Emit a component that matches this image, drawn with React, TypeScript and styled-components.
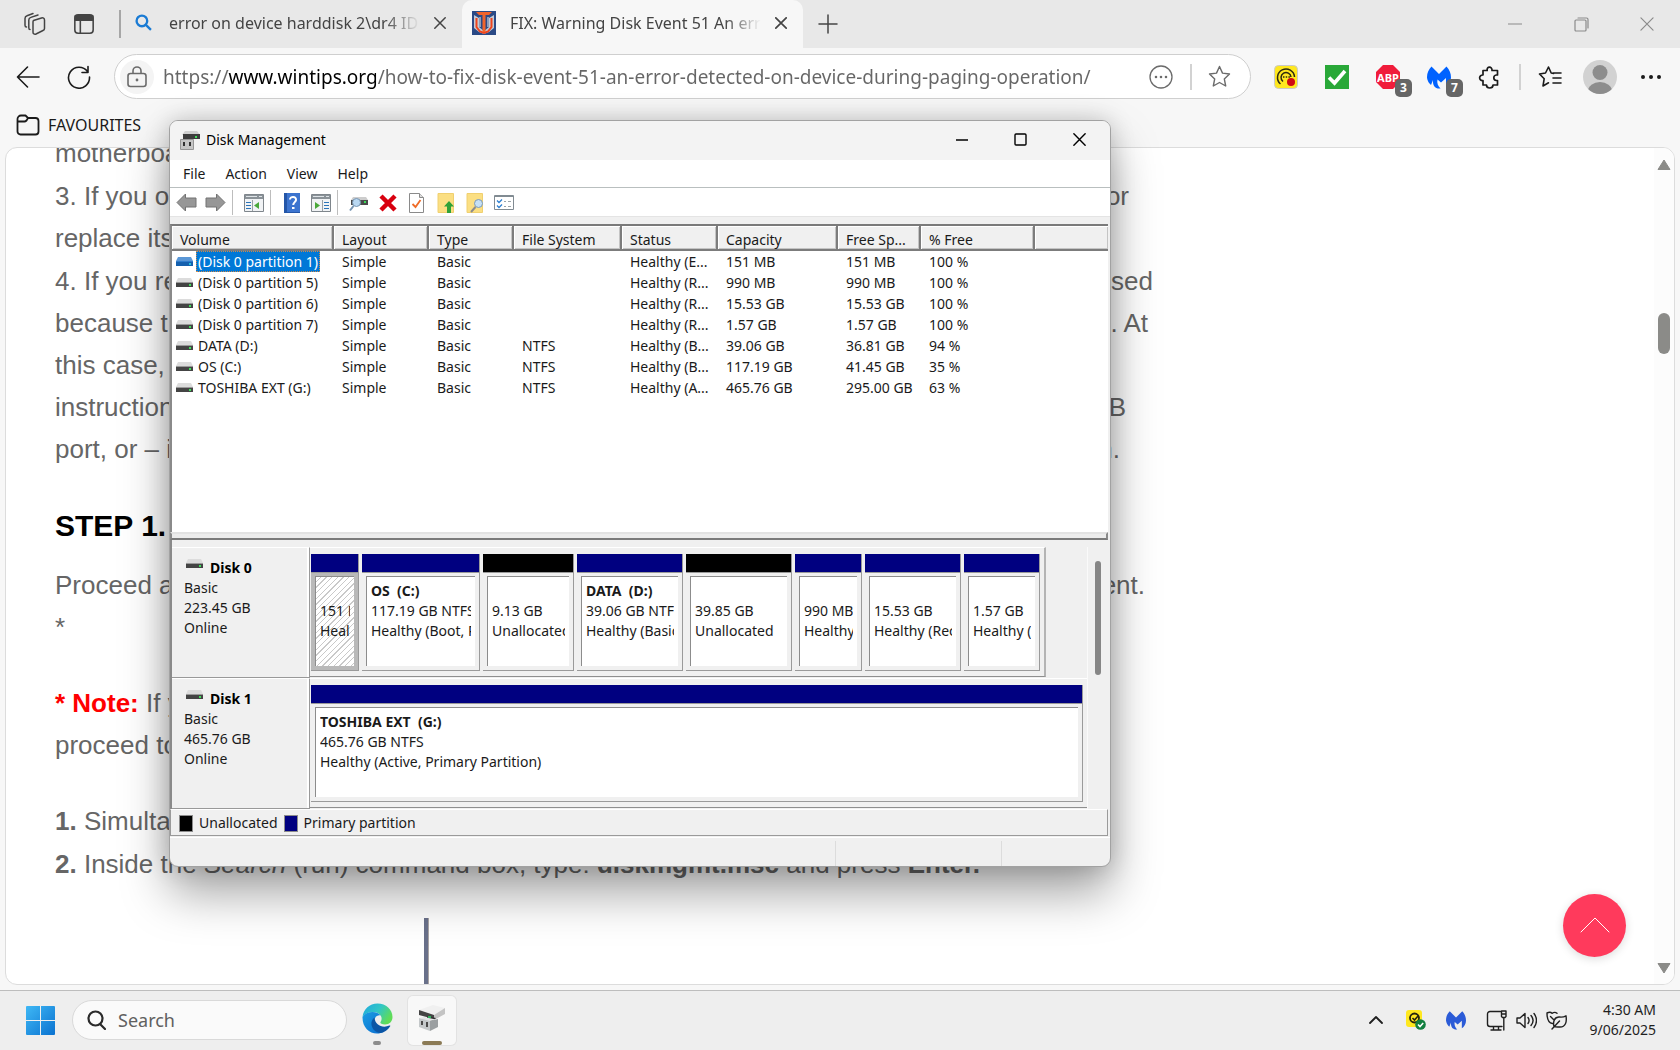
import React from "react";
import styled, { createGlobalStyle, css } from "styled-components";

const uiFont = `"Noto Sans", "Open Sans", sans-serif`;

const GlobalStyle = createGlobalStyle`
  *, *::before, *::after { box-sizing: border-box; }
  body { margin: 0; background: #f7f7f7; font-family: ${uiFont}; }
  button, input { font: inherit; color: inherit; }
  svg { display: block; flex: none; }
`;

/* ---------- desktop shell ---------- */

const Desktop = styled.div`
  position: relative;
  height: 100vh;
  display: flex;
  flex-direction: column;
  overflow: hidden;
  background: #f7f7f7;
`;

const plainButton = css`
  display: flex;
  align-items: center;
  justify-content: center;
  flex: none;
  padding: 0;
  border: 0;
  background: none;
`;

const IconButton = styled.button<{ $w: number }>`
  ${plainButton}
  position: relative;
  width: ${(p) => p.$w}px;
  height: 44px;
`;

const TabStrip = styled.nav`
  display: flex;
  align-items: center;
  height: 48px;
  padding-left: 10px;
  background: #e8e8e8;
  color: #444;
`;

const StripDivider = styled.span`
  width: 2px;
  height: 28px;
  margin: 0 0 0 9px;
  background: #a6a6a6;
`;

const Tab = styled.div<{ $active?: boolean }>`
  display: flex;
  align-items: center;
  width: 341px;
  height: 48px;
  padding: 0 10px 3px;
  font-size: 16px;
  line-height: 24px;
  border-radius: 10px 10px 0 0;
  background: ${(p) => (p.$active ? "#f7f7f7" : "transparent")};
`;

const Favicon = styled.span`
  display: flex;
  justify-content: center;
  flex: none;
  width: 24px;
`;

const TabTitle = styled.span`
  flex: 1;
  min-width: 0;
  margin: 0 8px 0 14px;
  overflow: hidden;
  white-space: nowrap;
  mask-image: linear-gradient(to right, #000 calc(100% - 36px), transparent);
`;

const SmallButton = styled.button<{ $w?: number }>`
  ${plainButton}
  width: ${(p) => p.$w ?? 24}px;
  height: 24px;
`;

const WindowControls = styled.div`
  display: flex;
  margin-left: auto;
  color: #8a8a8a;
`;

const AddressRow = styled.header`
  display: flex;
  align-items: center;
  padding: 6px 3px 0 2px;
  color: #1b1b1b;
`;

const AddressBar = styled.label`
  display: flex;
  align-items: center;
  flex: 1;
  min-width: 0;
  height: 45px;
  margin: 0 9px 0 10px;
  padding: 0 6px 0 5px;
  border: 1px solid #cfcfcf;
  border-radius: 23px;
  background: #fff;
  color: #6b6b6b;
`;

const LockBadge = styled.span`
  display: flex;
  align-items: center;
  justify-content: center;
  width: 34px;
  height: 34px;
  border-radius: 50%;
  background: #f4f4f4;
`;

const AddressInput = styled.input`
  flex: 1;
  min-width: 0;
  padding: 0;
  margin-left: 9px;
  border: 0;
  outline: 0;
  font-size: 19px;
  line-height: 28px;
  background-color: transparent;
  background-image: linear-gradient(to right, #666 0 65px, #000 65px 213px, #666 213px);
  background-clip: text;
  -webkit-background-clip: text;
  -webkit-text-fill-color: transparent;
`;

const BarDivider = styled.span`
  flex: none;
  width: 2px;
  height: 26px;
  margin: 0 4px;
  background: #d2d2d2;
`;

const Count = styled.span`
  position: absolute;
  right: 1px;
  bottom: 2px;
  width: 17px;
  height: 18px;
  border-radius: 5px;
  background: #666;
  color: #fff;
  font-size: 12px;
  font-weight: 700;
  line-height: 18px;
  text-align: center;
`;

const Avatar = styled.button`
  ${plainButton}
  margin: 0 8px;
`;

const FavouritesBar = styled.div`
  display: flex;
  padding: 11px 16px 0;
  height: 48px;
`;

const FavouriteFolder = styled.button`
  ${plainButton}
  gap: 8px;
  height: 30px;
  font-size: 16px;
  line-height: 24px;
  color: #1b1b1b;
`;

/* ---------- article ---------- */

const PageCard = styled.main`
  position: relative;
  flex: 1;
  min-height: 0;
  display: flex;
  margin: 0 5px 5px;
  overflow: hidden;
  border: 1px solid #dcdcdc;
  border-radius: 12px;
  background: #fff;
`;

const Article = styled.article`
  flex: 1;
  min-width: 0;
  margin-top: -16px;
  padding-left: 49px;
  color: #666;
  font-family: "Liberation Sans", Arial, sans-serif;
  font-size: 26px;
  line-height: 42px;
`;

const Paragraph = styled.p<{ $gap?: number }>`
  margin: ${(p) => p.$gap ?? 1}px 0 0;
`;

const Line = styled.span<{ $w?: number }>`
  display: flex;
  justify-content: space-between;
  width: ${(p) => (p.$w ? `${p.$w}px` : "auto")};
  white-space: pre;
`;

const StepHeading = styled.h2`
  margin: 35px 0 17px;
  color: #000;
  font-size: 30px;
  line-height: 42px;
`;

const NoteLabel = styled.strong`
  color: #f00;
`;

const FigureEdge = styled.div`
  width: 5px;
  height: 120px;
  margin: 33px 0 0 369px;
  background: #69708a;
  border-right: 1px solid #a9a4a4;
`;

const ScrollRail = styled.div`
  display: flex;
  flex-direction: column;
  align-items: center;
  width: 20px;
  padding: 11px 0 10px;
  background: #fcfcfc;
  color: #8b8b88;
`;

const ScrollThumb = styled.span`
  width: 12px;
  height: 41px;
  margin: 142px 0 auto;
  border-radius: 6px;
  background: #8b8b88;
`;

const TopButton = styled.button`
  ${plainButton}
  position: absolute;
  right: 48px;
  bottom: 27px;
  width: 63px;
  height: 63px;
  border-radius: 50%;
  background: #ff3a5c;
  color: #fff;
  box-shadow: 0 2px 10px rgba(0, 0, 0, 0.14);
`;

/* ---------- disk management window ---------- */

const MgmtWindow = styled.section`
  position: absolute;
  left: 169px;
  top: 120px;
  width: 942px;
  overflow: hidden;
  border: 1px solid #a2a2a2;
  border-radius: 9px;
  background: #f0f0f0;
  color: #1a1a1a;
  font-size: 14px;
  line-height: 20px;
  box-shadow: 0 26px 48px rgba(0, 0, 0, 0.36), 0 0 24px rgba(0, 0, 0, 0.18);
`;

const TitleBar = styled.header`
  display: flex;
  align-items: center;
  height: 39px;
  padding: 0 1px 2px 10px;
  background: #f3f3f3;
  color: #000;
`;

const TitleText = styled.h1`
  flex: 1;
  margin: 0 0 0 6px;
  font-size: 14px;
  font-weight: 400;
  line-height: 20px;
`;

const TitleButton = styled.button`
  ${plainButton}
  width: 59px;
  height: 36px;
`;

const MenuBar = styled.nav`
  display: flex;
  gap: 20px;
  height: 28px;
  padding: 0 13px;
  background: #fff;
  border-bottom: 1px solid #b9bfbf;
`;

const MenuItem = styled.button`
  ${plainButton}
`;

const ToolBar = styled.div`
  display: flex;
  align-items: center;
  height: 29px;
  padding: 1px 2px 0;
  background: #fff;
  border-bottom: 1px solid #e4e4e4;
`;

const ToolButton = styled.button`
  ${plainButton}
  width: 29px;
  height: 26px;
`;

const ToolDivider = styled.span`
  width: 1px;
  height: 25px;
  margin: 0 6px 0 2px;
  background: #bdbdbd;
`;

const ListPane = styled.div`
  height: 308px;
  margin: 7px 2px 0 0;
  border-top: 2px solid #7a7a7a;
  border-left: 2px solid #8a8a8a;
  background: #fff;
`;

const VolumeTable = styled.table`
  width: 100%;
  table-layout: fixed;
  border-collapse: separate;
  border-spacing: 0;
`;

const HeadCell = styled.th<{ $w?: number }>`
  width: ${(p) => (p.$w ? `${p.$w}px` : "auto")};
  height: 25px;
  padding: 5px 0 0 8px;
  border-right: 2px solid #7c7c7c;
  border-bottom: 2px solid #7c7c7c;
  box-shadow: inset 1px 1px 0 #fff, inset -1px -1px 0 #c4c4c4;
  background: #f0f0f0;
  font-weight: 400;
  line-height: 18px;
  text-align: left;
  white-space: nowrap;
  &:last-child { border-right: 0; }
`;

const Cell = styled.td`
  height: 21px;
  padding: 1px 0 0 8px;
  line-height: 20px;
  white-space: nowrap;
  &:first-child { padding: 0 0 0 4px; }
`;

const VolumeName = styled.span<{ $selected: boolean }>`
  display: flex;
  align-items: center;
  gap: 3px;
  > span {
    padding: 0 1px;
    border: 1px dotted ${(p) => (p.$selected ? "#d08a4a" : "transparent")};
    line-height: 19px;
    background: ${(p) => (p.$selected ? "#0078d7" : "none")};
    color: ${(p) => (p.$selected ? "#fff" : "inherit")};
  }
`;

const Splitter = styled.div`
  height: 8px;
  margin-right: 2px;
  border-top: 2px solid #e2e2e2;
  border-bottom: 2px solid #7a7a7a;
  border-left: 2px solid #8a8a8a;
  border-right: 2px solid #8a8a8a;
  background: #ececec;
`;

const GraphPane = styled.div`
  display: flex;
  margin-right: 2px;
  padding-top: 7px;
  border-left: 2px solid #8a8a8a;
`;

const Disks = styled.div`
  flex: 1;
  min-width: 0;
`;

const DiskRow = styled.div`
  display: flex;
  height: 131px;
`;

const DiskLabel = styled.div`
  flex: none;
  width: 138px;
  padding: 10px 0 0 12px;
  border-top: 1px solid #fff;
  border-right: 1px solid #999;
  border-bottom: 1px solid #999;
  box-shadow: inset -2px 0 0 #fff;
`;

const DiskTitle = styled.div`
  display: flex;
  gap: 7px;
  padding-left: 2px;
  color: #000;
  font-weight: 700;
`;

const Partitions = styled.div<{ $full?: boolean }>`
  display: flex;
  flex: ${(p) => (p.$full ? "1" : "none")};
  gap: 3px;
  height: 130px;
  padding: 6px ${(p) => (p.$full ? 4 : 4)}px 5px 1px;
  border-top: 1px solid #fff;
  border-right: ${(p) => (p.$full ? "0" : "2px solid #b4b4b4")};
  border-bottom: 1px solid #8e8e8e;
`;

const Partition = styled.div<{ $w?: number }>`
  display: flex;
  flex-direction: column;
  flex: ${(p) => (p.$w ? `0 0 ${p.$w}px` : "1")};
  min-width: 0;
  border-right: 1px solid #9a9a9a;
  border-bottom: 1px solid #9a9a9a;
`;

const PartitionBar = styled.div<{ $free?: boolean }>`
  flex: none;
  height: 19px;
  border-bottom: 1px solid #9a9a9a;
  background: ${(p) => (p.$free ? "#000" : "#000080")};
`;

const PartitionFrame = styled.div<{ $selected?: boolean }>`
  display: flex;
  flex: 1;
  min-height: 0;
  padding: 3px 4px 4px;
  background: ${(p) => (p.$selected ? "#b9b9b9" : "#f0f0f0")};
`;

const PartitionBody = styled.div<{ $selected?: boolean }>`
  flex: 1;
  min-width: 0;
  padding: 4px 4px 0;
  border-top: 1px solid #8c8c8c;
  border-left: 1px solid #8c8c8c;
  background: ${(p) =>
    p.$selected
      ? "repeating-linear-gradient(135deg, #fff 0 3px, #c9c9c9 3px 4px)"
      : "#fff"};
`;

const PartitionText = styled.div<{ $bold?: boolean }>`
  height: 20px;
  overflow: hidden;
  white-space: pre;
  font-weight: ${(p) => (p.$bold ? 700 : 400)};
`;

const PaneScroll = styled.div`
  width: 21px;
  border-left: 1px solid #fafafa;
`;

const PaneThumb = styled.div`
  width: 6px;
  height: 114px;
  margin: 14px 0 0 7px;
  border-radius: 3px;
  background: #868686;
`;

const Legend = styled.div`
  display: flex;
  align-items: center;
  gap: 6px;
  height: 27px;
  margin-right: 2px;
  padding: 1px 0 0 8px;
  border: 1px solid #9a9a9a;
  border-top-color: #fff;
`;

const Swatch = styled.span<{ $c: string }>`
  width: 14px;
  height: 17px;
  border: 1px solid #8c8c8c;
  background: ${(p) => p.$c};
`;

const StatusBar = styled.footer`
  display: flex;
  height: 29px;
  margin-top: 1px;
  border-top: 1px solid #fff;
`;

const StatusCell = styled.span<{ $w?: number }>`
  flex: ${(p) => (p.$w ? `0 0 ${p.$w}px` : "1")};
  margin-top: 3px;
  border-left: ${(p) => (p.$w ? "1px solid #dcdcdc" : "0")};
`;

/* ---------- taskbar ---------- */

const TaskBar = styled.footer`
  display: flex;
  align-items: center;
  height: 60px;
  padding: 0 24px 1px 26px;
  border-top: 1px solid #bdbdbd;
  background: #eee;
  color: #1f1f1f;
`;

const SearchBox = styled.label`
  display: flex;
  align-items: center;
  gap: 12px;
  width: 275px;
  height: 40px;
  margin: 0 6px 0 17px;
  padding: 0 14px;
  border: 1px solid #d9d9d9;
  border-radius: 20px;
  background: #fafafa;
`;

const SearchInput = styled.input`
  flex: 1;
  min-width: 0;
  padding: 0;
  border: 0;
  outline: 0;
  background: none;
  font-size: 18px;
  line-height: 26px;
  &::placeholder { color: #606060; opacity: 1; }
`;

const TaskButton = styled.button<{ $active?: boolean }>`
  ${plainButton}
  position: relative;
  width: 48px;
  height: 49px;
  margin: 0 3px 0 ${(p) => (p.$active ? "4px" : "0")};
  padding: 0 0 4px;
  border-radius: 5px;
  background: ${(p) => (p.$active ? "#f8f8f8" : "none")};
  box-shadow: ${(p) => (p.$active ? "0 0 0 1px #e2e2e2" : "none")};
  &::after {
    content: "";
    position: absolute;
    bottom: 0;
    left: 50%;
    width: ${(p) => (p.$active ? 20 : 8)}px;
    height: 4px;
    border-radius: 2px;
    transform: translateX(-50%);
    background: ${(p) => (p.$active ? "#8b7a55" : "#8c8c8c")};
  }
`;

const Tray = styled.div`
  display: flex;
  align-items: center;
  margin-left: auto;
`;

const TrayButton = styled.button<{ $w: number }>`
  ${plainButton}
  width: ${(p) => p.$w}px;
  height: 40px;
`;

const Clock = styled.time`
  width: 85px;
  font-size: 14px;
  line-height: 20px;
  text-align: right;
`;

/* ---------- icons ---------- */

type StrokeProps = { size?: number; w?: number; children: React.ReactNode; box?: number };
const Stroke = ({ size = 24, w = 1.6, box = 24, children }: StrokeProps) => (
  <svg width={size} height={size} viewBox={`0 0 ${box} ${box}`} fill="none" stroke="currentColor"
    strokeWidth={w} strokeLinecap="round" strokeLinejoin="round" aria-hidden="true">{children}</svg>
);

const Cross = ({ size = 12, w = 1.5 }: { size?: number; w?: number }) => (
  <Stroke size={size} box={12} w={w}><path d="M.8.8l10.4 10.4M11.2.8L.8 11.2" /></Stroke>
);

const DriveIcon = ({ selected }: { selected?: boolean }) => (
  <svg width="17" height="12" viewBox="0 0 17 12" aria-hidden="true">
    <path d="M2 1h13l2 4H0z" fill={selected ? "#5a97d6" : "#dcdcdc"} />
    <path d="M0 5h17v5H0z" fill={selected ? "#1560ae" : "#444"} />
    <path d="M0 5h17v1H0z" fill={selected ? "#2f7ccc" : "#9a9a9a"} />
    <path d="M13 7h2v2h-2z" fill={selected ? "#25c0d8" : "#3fe05a"} />
  </svg>
);

const DiskAppIcon = () => (
  <svg width="20" height="20" viewBox="0 0 20 20" aria-hidden="true">
    <path d="M5 1h12l3 4H2z" fill="#d0d0d0" />
    <path d="M3 4h17v5H3z" fill="#3d3d3d" />
    <path d="M15 6h2v2h-2z" fill="#42df5c" />
    <path d="M.5 9.500h13v10H.5z" fill="#c6c6c6" stroke="#969696" />
    <path d="M3 12h2v4H3zM9 12h2v4H9z" fill="#333" />
  </svg>
);

const TaskDiskIcon = () => (
  <svg width="28" height="28" viewBox="0 0 28 28" aria-hidden="true">
    <path d="M1 6L15 1l12 3-11 7z" fill="#f0f0f0" />
    <path d="M1 6l15 5v4L1 11z" fill="#444" />
    <path d="M16 11l11-7v6l-11 6z" fill="#c4c4c4" />
    <path d="M9 12l9 2-4 4-5-2z" fill="#353535" />
    <path d="M10 12h3v2h-3z" fill="#2fb35c" />
    <path d="M1 14l11 2v11L1 23z" fill="#c4c8ca" />
    <path d="M1 14l5-1 14 3-8 1z" fill="#e3e5e6" />
    <path d="M12 17l8-2v8l-8 4z" fill="#9b9fa1" />
    <path d="M3 17h2v4H3zM8 18h2v5H8z" fill="#4a4a4a" />
  </svg>
);

const WintipsIcon = () => (
  <svg width="24" height="24" viewBox="0 0 24 24" aria-hidden="true">
    <path d="M0 0h24v24H0z" fill="#2b4a86" />
    <path d="M2 4l5 3v9l5 4 5-4V7l5-3v13l-5 4-5 2-5-2-5-4z" fill="#c3c9d4" />
    <path d="M4.500 7v9l3.500 4.500 4 1.500 4-1.500 3.500-4.500V7" fill="none" stroke="#f0441c" strokeWidth="2" />
    <path d="M8 6v10M16 6v10" stroke="#c3c9d4" strokeWidth="1.300" />
    <path d="M4 1h16l-3 3h-3.500v17h-3V4H7z" fill="#f0642c" />
  </svg>
);

const MalwareIcon = ({ c, size = 24 }: { c: string; size?: number }) => (
  <svg width={size} height={size} viewBox="0 0 24 24" aria-hidden="true">
    <path d="M4.500 1.500L12 9l7.500-7.500C22.500 4.500 24 8.500 24 12.500c0 4-2 7.500-5 9.500v-9l-5 4.500-3.500-3c-.8 3.500.5 6.500 3 9-5.500.5-8-3-7.500-8.500L4 20C.5 17 0 13 0 12 0 8 1.800 4 4.500 1.500z" fill={c} />
  </svg>
);

const EdgeIcon = () => (
  <svg width="31" height="31" viewBox="0 0 31 31" aria-hidden="true">
    <defs>
      <linearGradient id="edgeTop" x1="0" y1="0" x2="1" y2="0.5">
        <stop offset="0" stopColor="#1fa7e0" /><stop offset=".55" stopColor="#31c6c6" /><stop offset="1" stopColor="#5fdc57" />
      </linearGradient>
      <linearGradient id="edgeLeft" x1="0" y1="0" x2="1" y2="1">
        <stop offset="0" stopColor="#1b9de2" /><stop offset="1" stopColor="#0a6cd0" />
      </linearGradient>
    </defs>
    <path d="M.5 14C1.500 6 7.500.5 15.500.5 24 .5 30.500 6.500 30.500 14c0 4.500-3 7.500-7.500 7.500-3.500 0-5-1.300-4.600-2.300.5-1 1.200-1.700 1.200-3.700C19.600 12 16 9 11 9 6 9 2.500 11 .5 14z" fill="url(#edgeTop)" />
    <path d="M.5 14C2.500 10.500 6 9 10.500 9c4 0 6.500 1.500 8 3.500-2.500-1-6.500 1.500-6.500 6 0 5.500 4.500 10 10 10-2 1.500-4.500 2-7 2C7 30.500.3 24 .5 14z" fill="url(#edgeLeft)" />
    <path d="M12.500 14.500C10 16.500 9 19 9.500 22c.8 4.500 4.500 7.500 9 8 4-.8 7.500-3.200 9.700-6.800.3-.6-.2-1-.8-.7C21 25.500 13 22.500 12.500 14.500z" fill="#0b55a5" />
  </svg>
);

const WindowsIcon = () => (
  <svg width="29" height="29" viewBox="0 0 29 29" aria-hidden="true">
    <defs>
      <linearGradient id="win" x1="0" y1="0" x2="1" y2="1">
        <stop offset="0" stopColor="#3fb8f5" /><stop offset="1" stopColor="#0a72d0" />
      </linearGradient>
    </defs>
    <path d="M1 0h13v14H0V1a1 1 0 011-1zM15 0h13a1 1 0 011 1v13H15zM0 15h14v14H1a1 1 0 01-1-1zM15 15h14v13a1 1 0 01-1 1H15z" fill="url(#win)" />
  </svg>
);

const Puzzle = () => (
  <Stroke w={1.7}><path d="M5 5.500h4.200C8.200 1 14.500 1 14 5.500h5.500V10h-1.300c-3.200.5-3.200 5 0 5.500h1.300V20H15c0 4-6.500 4-6.500 0H5v-4.500C.5 16 .5 9.800 5 10z" /></Stroke>
);

const starPath = "M11.500 1.500l3 6.600 7 .9-5.200 4.900 1.400 7.100-6.200-3.500L5.300 21l1.400-7.100L1.500 9l7-.9z";

const PanelIcon = ({ flip }: { flip?: boolean }) => (
  <svg width="20" height="18" viewBox="0 0 20 18" aria-hidden="true">
    <path d="M.5.500h19v17H.5z" fill="#f1f3f5" stroke="#7f868c" />
    <path d="M1 1h18v4H1z" fill="#8a9298" />
    <path d="M2 2h11v1H2zM15 2h3v1h-3z" fill="#dfe4e8" />
    <path d={flip ? "M13 8h5v1h-5zM13 11h5v1h-5zM13 14h5v1h-5z" : "M2 8h5v1H2zM2 11h5v1H2zM2 14h5v1H2z"} fill="#2b74b8" />
    <path d={flip ? "M11.500 6v11" : "M8.500 6v11"} stroke="#9aa1a6" />
    <path d={flip ? "M4 8l5 3.500L4 15z" : "M15 8l-5 3.500L15 15z"} fill="#4aa83a" />
  </svg>
);

const Arrow = ({ flip }: { flip?: boolean }) => (
  <svg width="21" height="19" viewBox="0 0 21 19" aria-hidden="true">
    <path d={flip ? "M20 9.500L11.500 18v-4H1V5h10.500V1z" : "M1 9.500L9.500 1v4H20v9H9.500v4z"} fill="#979797" stroke="#737373" />
  </svg>
);

const HelpIcon = () => (
  <svg width="16" height="20" viewBox="0 0 16 20" aria-hidden="true">
    <path d="M0 0h16v20H0z" fill="#2456a8" /><path d="M3 0h13v19H3z" fill="#3c74cf" />
    <path d="M6 6.500C6 3 12.500 3 12 7c-.3 2-2.800 2.500-2.800 5" fill="none" stroke="#fff" strokeWidth="2" />
    <path d="M8 14h2.500v2H8z" fill="#fff" />
  </svg>
);

const ScanDiskIcon = () => (
  <svg width="20" height="18" viewBox="0 0 20 18" aria-hidden="true">
    <path d="M4 3h13l2 3H2z" fill="#cdcdcd" /><path d="M2 6h17v5H2z" fill="#4a4a4a" />
    <path d="M15 7h2v2h-2z" fill="#3cdc58" />
    <circle cx="7.500" cy="8.500" r="4" fill="#b9d8f2" stroke="#7795b2" /><path d="M4.500 12L1 16.500" stroke="#7795b2" strokeWidth="2" />
  </svg>
);

const RedCross = () => (
  <svg width="18" height="18" viewBox="0 0 18 18" aria-hidden="true">
    <path d="M2 2l14 14M16 2L2 16" stroke="#d8000f" strokeWidth="4.500" />
  </svg>
);

const CheckDoc = () => (
  <svg width="15" height="20" viewBox="0 0 15 20" aria-hidden="true">
    <path d="M.5.500h10l4 4v15H.5z" fill="#fff" stroke="#8a8a8a" /><path d="M10.500.500v4h4" fill="#ddd" stroke="#8a8a8a" />
    <path d="M3.500 11l3 3 5-7" fill="none" stroke="#ef6c28" strokeWidth="1.800" />
  </svg>
);

const FolderTool = ({ find }: { find?: boolean }) => (
  <svg width="18" height="20" viewBox="0 0 18 20" aria-hidden="true">
    <path d="M1 .5h15.500v19H1z" fill="#fbdf83" stroke="#f0d070" />
    {find ? (
      <><circle cx="12.500" cy="10.500" r="4" fill="#c5e0f5" stroke="#7c9ab8" /><path d="M9.500 14L5 19" stroke="#8c8c8c" strokeWidth="2" /></>
    ) : (
      <path d="M12 8l5 5.500h-3V20h-4v-6.500H7z" fill="#2fa238" />
    )}
  </svg>
);

const OptionsIcon = () => (
  <svg width="20" height="17" viewBox="0 0 20 17" aria-hidden="true">
    <path d="M.5 1.500h19v14H.5z" fill="#fff" stroke="#818b92" /><path d="M1 1h18v2H1z" fill="#818b92" />
    <path d="M3 6.500l2 2 3-3M3 11.500l2 2 3-3" fill="none" stroke="#2d7fd0" strokeWidth="1.300" />
    <path d="M10 7.500h2M14 7.500h3M10 12.500h2M14 12.500h3" stroke="#9aa3a9" />
  </svg>
);

/* ---------- data ---------- */

const columns: [string, number?][] = [
  ["Volume", 162], ["Layout", 95], ["Type", 85], ["File System", 108], ["Status", 96],
  ["Capacity", 120], ["Free Sp...", 83], ["% Free", 114], [""],
];

const volumes = [
  ["(Disk 0 partition 1)", "Simple", "Basic", "", "Healthy (E...", "151 MB", "151 MB", "100 %"],
  ["(Disk 0 partition 5)", "Simple", "Basic", "", "Healthy (R...", "990 MB", "990 MB", "100 %"],
  ["(Disk 0 partition 6)", "Simple", "Basic", "", "Healthy (R...", "15.53 GB", "15.53 GB", "100 %"],
  ["(Disk 0 partition 7)", "Simple", "Basic", "", "Healthy (R...", "1.57 GB", "1.57 GB", "100 %"],
  ["DATA (D:)", "Simple", "Basic", "NTFS", "Healthy (B...", "39.06 GB", "36.81 GB", "94 %"],
  ["OS (C:)", "Simple", "Basic", "NTFS", "Healthy (B...", "117.19 GB", "41.45 GB", "35 %"],
  ["TOSHIBA EXT (G:)", "Simple", "Basic", "NTFS", "Healthy (A...", "465.76 GB", "295.00 GB", "63 %"],
];

type Part = { name?: string; size: string; state: string; w?: number; free?: boolean; selected?: boolean };
type Disk = { title: string; size: string; parts: Part[] };

const disks: Disk[] = [
  {
    title: "Disk 0",
    size: "223.45 GB",
    parts: [
      { size: "151 MB", state: "Healthy", w: 48, selected: true },
      { name: "OS  (C:)", size: "117.19 GB NTFS", state: "Healthy (Boot, Page File)", w: 118 },
      { size: "9.13 GB", state: "Unallocated", w: 91, free: true },
      { name: "DATA  (D:)", size: "39.06 GB NTFS", state: "Healthy (Basic Data)", w: 106 },
      { size: "39.85 GB", state: "Unallocated", w: 106, free: true },
      { size: "990 MB", state: "Healthy (Recovery)", w: 67 },
      { size: "15.53 GB", state: "Healthy (Recovery)", w: 96 },
      { size: "1.57 GB", state: "Healthy (Recovery)", w: 76 },
    ],
  },
  {
    title: "Disk 1",
    size: "465.76 GB",
    parts: [{ name: "TOSHIBA EXT  (G:)", size: "465.76 GB NTFS", state: "Healthy (Active, Primary Partition)" }],
  },
];

/* ---------- views ---------- */

const BrowserChrome = () => (
  <>
    <TabStrip aria-label="Tabs">
      <IconButton $w={48} aria-label="Workspaces">
        <Stroke w={1.5}><path d="M11.500 8.500l8-2.500c1.500-.5 3 .3 3 2v8.500c0 1-.5 1.700-1.500 2l-7 3.500c-1.500.7-3-.2-3-1.800V10c0-.8.2-1.200.5-1.500zM8 17.500c-1 0-1.200-.7-1.200-1.800V8c0-1.500.7-2.200 2-2.600L16 3M4.500 15c-1 0-1.500-.7-1.500-1.800V6.500C3 5 3.500 4.200 5 3.700L11 1.500" /></Stroke>
      </IconButton>
      <IconButton $w={52} aria-label="Tab actions">
        <Stroke size={22} w={1.7}><rect x="2" y="2" width="20" height="20" rx="3.500" /><path d="M2.500 3h19v5h-19z" fill="currentColor" /><path d="M8 8v14" /></Stroke>
      </IconButton>
      <StripDivider />
      <Tab>
        <Favicon>
          <svg width="17" height="17" viewBox="0 0 16 16" fill="none" stroke="#1a7bd4" strokeWidth="2.200" aria-hidden="true"><circle cx="6.500" cy="6.500" r="5" /><path d="M10 10l5 5" /></svg>
        </Favicon>
        <TabTitle>error on device harddisk 2\dr4 ID</TabTitle>
        <SmallButton aria-label="Close tab"><Cross /></SmallButton>
      </Tab>
      <Tab $active>
        <Favicon><WintipsIcon /></Favicon>
        <TabTitle>FIX: Warning Disk Event 51 An error</TabTitle>
        <SmallButton aria-label="Close tab"><Cross w={1.7} /></SmallButton>
      </Tab>
      <IconButton $w={50} aria-label="New tab"><Stroke size={20} box={20} w={1.5}><path d="M10 1v18M1 10h18" /></Stroke></IconButton>
      <WindowControls>
        <IconButton $w={66} aria-label="Minimise"><Stroke size={14} box={14} w={1.2}><path d="M0 7h14" /></Stroke></IconButton>
        <IconButton $w={66} aria-label="Restore"><Stroke size={15} box={15} w={1.2}><rect x="1" y="3" width="11" height="11" rx="1" /><path d="M4 1h8.500C13.500 1 14 1.500 14 2.500V11" /></Stroke></IconButton>
        <IconButton $w={66} aria-label="Close"><Cross size={14} w={1} /></IconButton>
      </WindowControls>
    </TabStrip>
    <AddressRow>
      <IconButton $w={51} aria-label="Back"><Stroke><path d="M23 12H1.500M11.500 2l-10 10 10 10" /></Stroke></IconButton>
      <IconButton $w={51} aria-label="Refresh"><Stroke><path d="M20.500 6.500A10.500 10.500 0 1022.500 12M21 1.500v6h-6" /></Stroke></IconButton>
      <AddressBar>
        <LockBadge><Stroke size={22} box={22}><rect x="2" y="7.500" width="18" height="13" rx="2.500" /><path d="M7 7V5a4 4 0 018 0v2" /><circle cx="11" cy="14" r=".6" fill="currentColor" /></Stroke></LockBadge>
        <AddressInput aria-label="Address" spellCheck={false} defaultValue="https://www.wintips.org/how-to-fix-disk-event-51-an-error-detected-on-device-during-paging-operation/" />
        <IconButton $w={50} as="span"><Stroke w={1.3}><circle cx="12" cy="12" r="11" /><path d="M7 12h.01M12 12h.01M17 12h.01" strokeWidth="2.600" /></Stroke></IconButton>
        <BarDivider />
        <IconButton $w={48} as="span"><Stroke w={1.4}><path d={starPath} /></Stroke></IconButton>
      </AddressBar>
      <IconButton $w={51} aria-label="Norton">
        <svg width="24" height="24" viewBox="0 0 24 24" aria-hidden="true">
          <rect x=".5" y=".5" width="23" height="23" rx="4" fill="#ffe81f" stroke="#c9c9c9" />
          <g fill="none" stroke="#2c2a10" strokeWidth="1.500"><path d="M6.500 19A8.500 8.500 0 1120.500 12" /><path d="M9 16.500A5 5 0 1117 12" /></g>
          <path d="M9 12h7" stroke="#2c2a10" strokeDasharray="1.500 1.200" strokeWidth="1.500" />
          <circle cx="17" cy="17" r="4" fill="#cf0a13" />
        </svg>
      </IconButton>
      <IconButton $w={51} aria-label="Safe web">
        <svg width="24" height="24" viewBox="0 0 24 24" aria-hidden="true"><path d="M0 0h24v24H0z" fill="#29a838" /><path d="M4 12.500l5.500 5.500L20 6" fill="none" stroke="#fff" strokeWidth="3.600" /></svg>
      </IconButton>
      <IconButton $w={51} aria-label="Ad blocker">
        <svg width="24" height="24" viewBox="0 0 24 24" aria-hidden="true">
          <path d="M7 0h10l7 7v10l-7 7H7l-7-7V7z" fill="#f01c3b" />
          <text x="12" y="16.500" fill="#fff" fontFamily="Noto Sans" fontSize="11" fontWeight="700" textAnchor="middle">ABP</text>
        </svg>
        <Count>3</Count>
      </IconButton>
      <IconButton $w={51} aria-label="Malwarebytes"><MalwareIcon c="#0062ff" /><Count>7</Count></IconButton>
      <IconButton $w={51} aria-label="Extensions"><Puzzle /></IconButton>
      <BarDivider />
      <IconButton $w={50} aria-label="Favourites">
        <Stroke><path d="M15.500 8.500L13.200 8l-2.700-6-3 6L1.500 9l4.700 4.700L5 21l5.500-3.200M15 8h8M15 13h8M15 18h8" /></Stroke>
      </IconButton>
      <Avatar aria-label="Profile">
        <svg width="34" height="34" viewBox="0 0 34 34" aria-hidden="true">
          <clipPath id="face"><circle cx="17" cy="17" r="17" /></clipPath>
          <g clipPath="url(#face)"><path d="M0 0h34v34H0z" fill="#d2d2d2" /><circle cx="17" cy="12.500" r="7.500" fill="#8d8d8d" /><ellipse cx="17" cy="31" rx="12" ry="9" fill="#8d8d8d" /></g>
        </svg>
      </Avatar>
      <IconButton $w={52} aria-label="Menu"><Stroke w={4}><path d="M4 12h.01M12 12h.01M20 12h.01" /></Stroke></IconButton>
    </AddressRow>
    <FavouritesBar>
      <FavouriteFolder>
        <Stroke size={24} w={1.8}><path d="M1.500 6A3.500 3.500 0 015 2.500h4.500L12 5h7.500a3 3 0 013 3v10.500a3 3 0 01-3 3h-15a3 3 0 01-3-3zM1.500 8.500h7c1 0 1.500-.5 2-1L12 5" /></Stroke>
        FAVOURITES
      </FavouriteFolder>
    </FavouritesBar>
  </>
);

const ArticlePage = () => (
  <PageCard>
    <Article>
      <Paragraph $gap={0}><Line>motherboa</Line></Paragraph>
      <Paragraph>
        <Line $w={1074}><span>3. If you o</span><span>or</span></Line>
        <Line>replace its</Line>
      </Paragraph>
      <Paragraph>
        <Line $w={1098}><span>4. If you re</span><span>used</span></Line>
        <Line $w={1093}><span>because t</span><span>. At</span></Line>
        <Line>this case,</Line>
        <Line $w={1071}><span>instruction</span><span>B</span></Line>
        <Line $w={1065}><span>port, or – i</span><span>n.</span></Line>
      </Paragraph>
      <StepHeading>STEP 1.</StepHeading>
      <Paragraph $gap={0}>
        <Line $w={1090}><span>Proceed a</span><span>ent.</span></Line>
        <Line>*</Line>
      </Paragraph>
      <Paragraph $gap={34}>
        <Line><span><NoteLabel>* Note:</NoteLabel> If y</span></Line>
        <Line>proceed to</Line>
      </Paragraph>
      <Paragraph $gap={34}>
        <Line><span><b>1.</b> Simulta</span></Line>
      </Paragraph>
      <Paragraph>
        <Line><span><b>2.</b> Inside the <i>Search</i> (run) command box, type: <b>diskmgmt.msc</b> and press <b>Enter.</b></span></Line>
      </Paragraph>
      <FigureEdge />
    </Article>
    <ScrollRail aria-hidden="true">
      <svg width="14" height="12" viewBox="0 0 14 12"><path d="M7 1l6 9.500H1z" fill="currentColor" stroke="currentColor" strokeLinejoin="round" /></svg>
      <ScrollThumb />
      <svg width="14" height="12" viewBox="0 0 14 12"><path d="M7 11L1 1.500h12z" fill="currentColor" stroke="currentColor" strokeLinejoin="round" /></svg>
    </ScrollRail>
    <TopButton aria-label="Back to top"><Stroke size={30} box={30} w={1}><path d="M1 21L15 7l14 14" /></Stroke></TopButton>
  </PageCard>
);

const PartitionView = ({ part }: { part: Part }) => (
  <Partition $w={part.w}>
    <PartitionBar $free={part.free} />
    <PartitionFrame $selected={part.selected}>
      <PartitionBody $selected={part.selected}>
        <PartitionText $bold>{part.name ?? " "}</PartitionText>
        <PartitionText>{part.size}</PartitionText>
        <PartitionText>{part.state}</PartitionText>
      </PartitionBody>
    </PartitionFrame>
  </Partition>
);

const DiskManagement = () => (
  <MgmtWindow aria-label="Disk Management">
    <TitleBar>
      <DiskAppIcon />
      <TitleText>Disk Management</TitleText>
      <TitleButton aria-label="Minimise"><Stroke size={12} box={12} w={1.3}><path d="M0 6h12" /></Stroke></TitleButton>
      <TitleButton aria-label="Maximise"><Stroke size={13} box={13} w={1.4}><rect x="1" y="1" width="11" height="11" rx="1" /></Stroke></TitleButton>
      <TitleButton aria-label="Close"><Cross size={13} w={1.3} /></TitleButton>
    </TitleBar>
    <MenuBar>
      {["File", "Action", "View", "Help"].map((m) => <MenuItem key={m}>{m}</MenuItem>)}
    </MenuBar>
    <ToolBar>
      <ToolButton aria-label="Back"><Arrow /></ToolButton>
      <ToolButton aria-label="Forward"><Arrow flip /></ToolButton>
      <ToolDivider />
      <ToolButton aria-label="Console tree"><PanelIcon /></ToolButton>
      <ToolDivider />
      <ToolButton aria-label="Help"><HelpIcon /></ToolButton>
      <ToolButton aria-label="Action pane"><PanelIcon flip /></ToolButton>
      <ToolDivider />
      <ToolButton aria-label="Rescan"><ScanDiskIcon /></ToolButton>
      <ToolButton aria-label="Delete"><RedCross /></ToolButton>
      <ToolButton aria-label="Properties"><CheckDoc /></ToolButton>
      <ToolButton aria-label="Up"><FolderTool /></ToolButton>
      <ToolButton aria-label="Find"><FolderTool find /></ToolButton>
      <ToolButton aria-label="Options"><OptionsIcon /></ToolButton>
    </ToolBar>
    <ListPane>
      <VolumeTable>
        <thead><tr>{columns.map(([name, w]) => <HeadCell key={name} $w={w} scope="col">{name}</HeadCell>)}</tr></thead>
        <tbody>
          {volumes.map(([name, ...rest], i) => (
            <tr key={name}>
              <Cell><VolumeName $selected={i === 0}><DriveIcon selected={i === 0} /><span>{name}</span></VolumeName></Cell>
              {rest.map((v, j) => <Cell key={j}>{v}</Cell>)}
              <Cell />
            </tr>
          ))}
        </tbody>
      </VolumeTable>
    </ListPane>
    <Splitter />
    <GraphPane>
      <Disks>
        {disks.map((d) => (
          <DiskRow key={d.title}>
            <DiskLabel>
              <DiskTitle><DriveIcon />{d.title}</DiskTitle>
              <div>Basic</div>
              <div>{d.size}</div>
              <div>Online</div>
            </DiskLabel>
            <Partitions $full={d.parts.length === 1}>
              {d.parts.map((p, i) => <PartitionView key={i} part={p} />)}
            </Partitions>
          </DiskRow>
        ))}
      </Disks>
      <PaneScroll><PaneThumb /></PaneScroll>
    </GraphPane>
    <Legend>
      <Swatch $c="#000" />Unallocated<Swatch $c="#000080" />Primary partition
    </Legend>
    <StatusBar><StatusCell /><StatusCell $w={166} /><StatusCell $w={109} /></StatusBar>
  </MgmtWindow>
);

const WindowsTaskBar = () => (
  <TaskBar>
    <SmallButton $w={29} aria-label="Start"><WindowsIcon /></SmallButton>
    <SearchBox>
      <svg width="19" height="20" viewBox="0 0 19 20" fill="none" stroke="#2b2b2b" strokeWidth="2.200" aria-hidden="true"><circle cx="8.500" cy="8.500" r="7" /><path d="M13 14l5 5" strokeLinecap="round" /></svg>
      <SearchInput type="text" placeholder="Search" aria-label="Search" />
    </SearchBox>
    <TaskButton aria-label="Edge"><EdgeIcon /></TaskButton>
    <TaskButton $active aria-label="Disk Management"><TaskDiskIcon /></TaskButton>
    <Tray>
      <TrayButton $w={50} aria-label="Hidden icons"><Stroke size={14} box={14} w={1.8}><path d="M1 10l6-6 6 6" /></Stroke></TrayButton>
      <TrayButton $w={30} aria-label="Norton">
        <svg width="20" height="20" viewBox="0 0 20 20" aria-hidden="true">
          <rect width="16" height="17" rx="3" fill="#ffe81f" /><circle cx="8.500" cy="8" r="4.500" fill="none" stroke="#26240d" strokeWidth="1.800" />
          <path d="M6.500 8l2 2 4-4.500" fill="none" stroke="#26240d" strokeWidth="1.600" />
          <circle cx="14.500" cy="14.500" r="5.300" fill="#128040" /><path d="M12 14.500l2 2 3.200-3.500" fill="none" stroke="#fff" strokeWidth="1.600" />
        </svg>
      </TrayButton>
      <TrayButton $w={50} aria-label="Malwarebytes"><MalwareIcon c="#2b5bd7" size={20} /></TrayButton>
      <TrayButton $w={30} aria-label="Network"><Stroke size={21} box={21} w={1.4}><path d="M14.500 1.500H4a2.500 2.500 0 00-2.500 2.500v10A2.500 2.500 0 004 16.500h12M7.500 17v3M12.500 17v3M5 20h10M15.500 1h4.500v5.500l-1 1h-2.500l-1-1zM15.500 4H20M17.800 7.500V20" /></Stroke></TrayButton>
      <TrayButton $w={30} aria-label="Volume"><Stroke size={21} box={21} w={1.4}><path d="M1 8h3l5-4.500v14L4 13H1zM12 7.500c1.300 1.800 1.300 4.200 0 6M15 5.500c2.500 3 2.500 7 0 10M18 3.500c3.300 4.200 3.300 9.800 0 14" /></Stroke></TrayButton>
      <TrayButton $w={30} aria-label="Energy saver"><Stroke size={21} box={21} w={1.4}><path d="M6.500 13.500C2.500 13 1 9.500 1 3c2-1 4-.8 5 .3C8 2 9.500 2 11 3.300M4.500 6.500l3 3M6 19L13.500 11M8 16.500c-1.300-4.500.5-10 5.500-9.500 2.500.3 4.500 0 6.500-1.200C21 12 19.500 17 14 17c-2.500 0-4.500.3-6-.5z" /></Stroke></TrayButton>
      <Clock>4:30 AM<br />9/06/2025</Clock>
    </Tray>
  </TaskBar>
);

export default function App() {
  return (
    <Desktop>
      <GlobalStyle />
      <BrowserChrome />
      <ArticlePage />
      <DiskManagement />
      <WindowsTaskBar />
    </Desktop>
  );
}
